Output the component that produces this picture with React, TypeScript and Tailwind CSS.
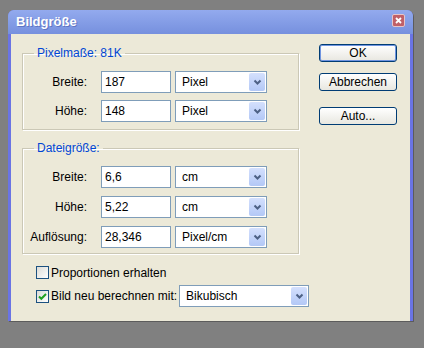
import React from "react";

const Chevron = () => (
  <svg width="9" height="7" viewBox="0 0 9 7">
    <path d="M1.5 1.5l3 3 3-3" fill="none" stroke="#4d6185" strokeWidth="2" />
  </svg>
);

const Select = ({ value, className }: { value: string; className?: string }) => (
  <div
    className={`flex h-[22px] shrink-0 items-center border border-[#7f9db9] bg-white ${className ?? ""}`}
  >
    <span className="flex-1 pl-[6px]">{value}</span>
    <div className="mr-px flex h-[18px] w-[16px] items-center justify-center rounded-[2px] bg-gradient-to-b from-[#d4e0fd] to-[#b3c8f6]">
      <Chevron />
    </div>
  </div>
);

const Row = ({ label, value, unit }: { label: string; value: string; unit: string }) => (
  <div className="flex h-[22px] items-center">
    <span className="w-[64px] text-right">{label}</span>
    <div className="ml-[14px] flex h-[22px] w-[70px] items-center border border-[#7f9db9] bg-white pl-[3px]">
      {value}
    </div>
    <Select value={unit} className="ml-[4px] w-[92px]" />
  </div>
);

const Checkbox = ({ checked }: { checked?: boolean }) => (
  <span className="flex h-[13px] w-[13px] shrink-0 items-center justify-center border border-[#1c5180] bg-gradient-to-br from-[#dcdcd7] to-white">
    {checked && (
      <svg width="9" height="9" viewBox="0 0 9 9">
        <path d="M1 4.5l2.3 2.3L8 2" fill="none" stroke="#21a121" strokeWidth="2" />
      </svg>
    )}
  </span>
);

const Button = ({ label, primary }: { label: string; primary?: boolean }) => (
  <button
    className={`h-[18px] w-[78px] rounded-[3px] border border-[#003c74] bg-gradient-to-b from-white to-[#e8e7e0] leading-[14px] ${
      primary ? "shadow-[inset_0_0_0_1px_#6f94e0]" : ""
    }`}
  >
    {label}
  </button>
);

export default function App() {
  return (
    <div className="h-[348px] w-[424px] bg-[#808080] pl-[8px] pt-[10px] font-[Liberation_Sans,Arial,sans-serif] text-[12px] leading-[14px] text-black">
      <div className="w-[405px] rounded-t-[6px] bg-[#6a74e4] shadow-[1px_1px_0_#5c5c5c]">
        {/* title bar */}
        <div className="flex h-[24px] items-center justify-between rounded-t-[6px] bg-gradient-to-b from-[#93aaee] to-[#7690de] pl-[8px] pr-[8px]">
          <span className="text-[13px] font-bold text-white [text-shadow:1px_1px_0_#5f76c4]">
            Bildgröße
          </span>
          <span className="mt-[-3px] flex h-[13px] w-[13px] items-center justify-center rounded-[2px] border border-[#e6c4c8] bg-[#c06068]">
            <svg width="7" height="7" viewBox="0 0 7 7">
              <path d="M1 1l5 5M6 1l-5 5" stroke="#fff" strokeWidth="1.8" />
            </svg>
          </span>
        </div>

        <div className="mx-[3px] mb-[3px] flex h-[287px] bg-[#ece9d8] pl-[11px] pt-[10px]">
          <div className="flex w-[277px] shrink-0 flex-col pt-[2px]">
            <fieldset className="w-[277px] border border-[#cbc8b6] pb-[7px] shadow-[inset_1px_1px_0_#fff,1px_1px_0_#fff]">
              <legend className="ml-[11px] px-[3px] text-[#0046d5]">Pixelmaße: 81K</legend>
              <div className="mt-[11px] flex flex-col gap-[7px]">
                <Row label="Breite:" value="187" unit="Pixel" />
                <Row label="Höhe:" value="148" unit="Pixel" />
              </div>
            </fieldset>

            <fieldset className="mt-[11px] w-[277px] border border-[#cbc8b6] pb-[5px] shadow-[inset_1px_1px_0_#fff,1px_1px_0_#fff]">
              <legend className="ml-[11px] px-[3px] text-[#0046d5]">Dateigröße:</legend>
              <div className="mt-[11px] flex flex-col gap-[8px]">
                <Row label="Breite:" value="6,6" unit="cm" />
                <Row label="Höhe:" value="5,22" unit="cm" />
                <Row label="Auflösung:" value="28,346" unit="Pixel/cm" />
              </div>
            </fieldset>

            <div className="ml-[14px] mt-[10px] flex h-[17px] items-center gap-[2px] whitespace-nowrap">
              <Checkbox />
              <span>Proportionen erhalten</span>
            </div>
            <div className="ml-[14px] mt-[4px] flex h-[22px] items-center whitespace-nowrap">
              <Checkbox checked />
              <span className="ml-[2px]">Bild neu berechnen mit:</span>
              <Select value="Bikubisch" className="ml-[2px] w-[130px]" />
            </div>
          </div>

          <div className="ml-[20px] flex flex-col">
            <Button label="OK" primary />
            <div className="mt-[11px]">
              <Button label="Abbrechen" />
            </div>
            <div className="mt-[16px]">
              <Button label="Auto..." />
            </div>
          </div>
        </div>
      </div>
    </div>
  );
}
